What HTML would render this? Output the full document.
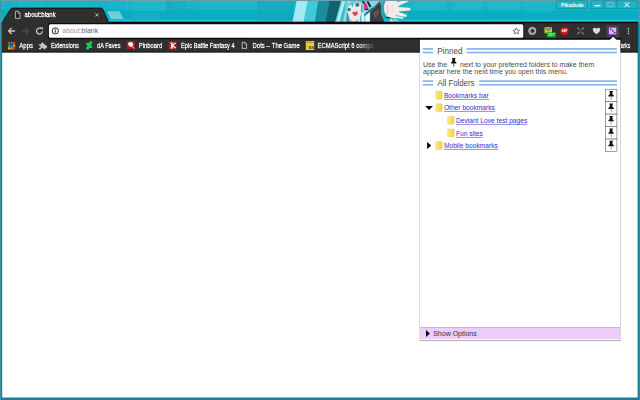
<!DOCTYPE html>
<html><head><meta charset="utf-8"><title>about:blank</title>
<style>
*{margin:0;padding:0;box-sizing:border-box}
html,body{width:640px;height:400px;overflow:hidden;background:#1b8196}
body{position:relative;font-family:"Liberation Sans",sans-serif}
svg{position:absolute;left:0;top:0}
text{font-family:"Liberation Sans",sans-serif;white-space:pre}
.h{font-size:8.6px;fill:#484848}
.p{font-size:7px;fill:#4c4c4c}
.l{font-size:6.67px;fill:#332dcc}
.bm{font-size:6.6px;fill:#fff;stroke:#fff;stroke-width:.28px}
</style></head><body>
<svg width="640" height="400" viewBox="0 0 640 400">
<defs>
<linearGradient id="fg" x1="0" x2="1" y1="0" y2="0"><stop offset="0" stop-color="#f8ea88"/><stop offset="1" stop-color="#eed24a"/></linearGradient>
<linearGradient id="fade" x1="0" x2="1"><stop offset="0" stop-color="#2f2f2f" stop-opacity="0"/><stop offset="1" stop-color="#2f2f2f"/></linearGradient>
<linearGradient id="tg" gradientUnits="userSpaceOnUse" x1="0" x2="0" y1="0" y2="22"><stop offset="0" stop-color="#19b7ca"/><stop offset=".42" stop-color="#15b4c8"/><stop offset=".52" stop-color="#09aec1"/><stop offset=".87" stop-color="#07adc0"/><stop offset=".91" stop-color="#20c2d5"/><stop offset="1" stop-color="#24c6d8"/></linearGradient>
</defs>
<!-- window frame -->
<rect x="0" y="0" width="640" height="400" fill="#1a7f95"/>
<rect x="0" y="0" width="1" height="400" fill="#3b90a2"/>
<rect x="639" y="0" width="1" height="400" fill="#2f8a9d"/>
<!-- title bar -->
<g id="titlebar">
  <rect x="0" y="0" width="640" height="23" fill="url(#tg)"/>
  <rect x="126" y="1" width="40" height="10" fill="#22bbce" opacity=".5"/>
  <rect x="132" y="13" width="28" height="8" fill="#1ab3c7" opacity=".6"/>
  <rect x="166" y="1" width="20" height="14" fill="#15aabe" opacity=".5"/>
  <rect x="200" y="1" width="57" height="9" fill="#21b9cc" opacity=".6"/>
  <rect x="257" y="1" width="36" height="20" fill="#13a8bd" opacity=".6"/>
  <rect x="414" y="1.5" width="32" height="9" fill="#20bbce" opacity=".55"/>
  <rect x="453" y="1.5" width="29" height="9" fill="#20bbce" opacity=".55"/>
  <rect x="488" y="1.5" width="32" height="9" fill="#20bbce" opacity=".55"/>
  <rect x="524" y="1.5" width="29" height="10.5" fill="#20bbce" opacity=".5"/>
  <path d="M449.5 1v11.5h-33M484 9.5l6 7.5h32v-6M130 1v14h38M168 1v14M262 10h-58v8" fill="none" stroke="#0e9db1" stroke-width=".6" opacity=".55"/>
  <rect x="4" y="1" width="14" height="12" fill="#14a9bd" opacity=".35"/>
  <rect x="44" y="1" width="18" height="7" fill="#14a9bd" opacity=".3"/>
  <rect x="86" y="1" width="22" height="7" fill="#14a9bd" opacity=".3"/>
  <rect x="30" y="1" width="60" height="6" fill="#20b6ca" opacity=".5"/>
    <polygon points="296.8,0 308,0 303.8,22 292.5,22" fill="#a7e8f2"/>
  <polygon points="308,0 318.3,0 315,22 303.8,22" fill="#3fc9db"/>
  <polygon points="318.3,0 329.6,0 325.4,22 315,22" fill="#1a8d9e"/>
  <polygon points="329.6,0 341.3,0 335.2,22 325.4,22" fill="#13636f"/>
  <!-- hair base -->
  <polygon points="341.3,0 381,0 381,22 335.2,22" fill="#5fcad8"/>
  <polygon points="342.6,0 345.6,0 339.2,22 336.4,22" fill="#b2ebf2"/>
  <polygon points="345.6,0 347.4,1 342,22 340.4,22" fill="#3fb4c5"/>
  <polygon points="346,6 347.6,8 346,22 343.5,22" fill="#8fdde7"/>
  <polygon points="347,12 348.6,14 349,22 346.4,22" fill="#2d9fb1"/>
  <!-- shirt / lower right light area -->
  <polygon points="360,13 369.5,11 370,22 358,22" fill="#e4f3f7"/>
  <polygon points="360.4,12 361.8,12 361.4,22 359.8,22" fill="#4fbccb"/>
  <polygon points="364,14 365.2,14 365.4,22 364,22" fill="#7fd3df"/>
  <!-- face -->
  <path d="M347 5.5C349.5 2.6 356.5 1.6 361 3L361.8 12C361 17 357.5 21.6 352.5 21.6C349.5 20 346.8 12 347 5.5z" fill="#f7e7e3"/>
  <path d="M349 18C351 20.5 354 21.6 357 20.6L352.5 21.8z" fill="#e9cfc8"/>
  <ellipse cx="349.1" cy="9.5" rx="1.7" ry="1.8" fill="#1b7f8b"/>
  <ellipse cx="357.3" cy="4.9" rx="2.1" ry="1.8" fill="#1b7f8b"/>
  <path d="M352.3 12.3C353.2 11.2 354.4 11.6 355 12.4C355.6 11 357.2 10.8 357.7 12C357.9 14 356.6 15.8 355.2 16C353.8 15.6 352.3 14 352.3 12.3z" fill="#c6465f"/>
  <!-- bangs -->
  <path d="M344.5 0H365L363.5 4.6 360.5 2.4 356.5 2.8 353.5 4 352.8 7.5 351 5 349 5.6 347 9 345.6 12z" fill="#68cedb"/>
  <path d="M347.5 0h3.5l-2.5 4.5zM354.5 0h3.5l-2 2.6z" fill="#b2ebf2"/>
  <path d="M351.2 3.6L353 3 352.9 7.6z" fill="#3fb4c5"/>
  <!-- right hair + tie -->
  <polygon points="361,2.5 381,0 380,6 373,8 366.5,13 362,12.5" fill="#7fd6e2"/>
  <polygon points="361,4 362.6,5 362.2,12.5 360.8,12" fill="#3fb4c5"/>
  <polygon points="361.2,0 362.8,0 366,4.6 364.6,5.2" fill="#17171d"/>
  <polygon points="363.9,3.4 366.7,3.8 368.2,9 364.4,8.8" fill="#e8247a"/>
  <polygon points="364.2,8.8 368.4,9 368.6,9.9 364.4,9.8" fill="#17171d"/>
  <polygon points="366.6,1.4 368.4,1.2 371.4,6.6 369.6,7.2" fill="#17171d"/>
  <polygon points="372.6,7.2 373.8,8.6 364.8,16 363.6,14.8" fill="#1f8592"/>
  <!-- sleeve -->
  <polygon points="380,1.5 381,6 381.2,15 384.5,22 370,22 370.2,12 375,7" fill="#3c3c41"/>
  <polygon points="373,13 378,9 379.6,13.6 375,19" fill="#55555b"/>
  <path d="M380.2 1.2L366.4 14" stroke="#2a2350" stroke-width=".6" fill="none"/>
  <path d="M385.4 1C380.6 5 380.4 13 384.6 18.2L392.5 20.8" fill="none" stroke="#2aa3b3" stroke-width="1.6"/>
  <path d="M386.4 17.2L392.5 18.3" stroke="#17171d" stroke-width="1" fill="none"/>
  <!-- hand -->
  <path d="M385.5 1.5C388 -0.8 396 -0.8 398.2 2.5L399 12C398 15.5 392 18 387.5 16.8C383.5 14.5 383 5.5 385.5 1.5z" fill="#f8eaea"/>
  <path d="M387 4.5C388.2 8 388 12 387 15" fill="none" stroke="#ecd3d1" stroke-width="1.6"/>
  <path d="M392.2 3.6C393 7 392.8 10 392 13" fill="none" stroke="#f0dcda" stroke-width="1"/>
  <polygon points="395,2.5 406,0 408.6,0 408.2,1.6 397.8,6.2" fill="#f8eaea"/>
  <polygon points="397.4,7 409.6,7.8 410.9,9.1 409.8,10.5 398,11.4" fill="#f8eaea"/>
  <polygon points="396.6,11.2 406.2,14.5 407,16 405.6,17 395,15" fill="#f8eaea"/>
  <polygon points="391,15.5 402.5,16.8 403.8,18 402.6,18.8 390,17.8" fill="#f7e6e4"/>
  <polygon points="389.5,18.6 395,18.8 399.4,22 390,22" fill="#a9e4ec"/>
  <polygon points="392,19 393.4,19 396.6,22 395,22" fill="#3fb4c5"/>
  <rect x="0" y="0" width="640" height="1" fill="#6f9ea8"/>
  <polygon points="107,11.2 119.6,11.2 123.6,18.9 111,18.9" fill="#6cd0dd"/>
  <g fill="#1fb4c8" stroke="#128a9c" stroke-width=".6">
    <rect x="556.5" y="0.8" width="30.8" height="7.8"/>
    <rect x="591" y="0.8" width="13" height="7.8"/>
    <rect x="604" y="0.8" width="13" height="7.8"/>
    <rect x="617" y="0.8" width="20.5" height="7.8"/>
  </g>
  <rect x="594.5" y="5" width="6" height="1.4" fill="#d7f3f7"/>
  <rect x="607.8" y="2.6" width="5.4" height="4" fill="none" stroke="#62c9d7" stroke-width=".9"/>
  <path d="M624.6 2.4l4.6 4.6M629.2 2.4l-4.6 4.6" stroke="#bdeaf0" stroke-width="1.1"/>
  <rect x="637.8" y="1" width="2.2" height="22" fill="#2aa9bb"/>
  <rect x="0" y="0" width="1.2" height="23" fill="#3b98a8"/>
  <text x="561" y="7" textLength="22.6" lengthAdjust="spacingAndGlyphs" style="font-size:5.6px;fill:#f4fcfd;font-weight:bold">Pikadude</text>
</g>
<!-- toolbar -->
<rect x="2" y="22" width="636" height="30.4" fill="#2f2f2f"/>
<rect x="2" y="51.7" width="636" height="1" fill="#0d0d0d"/>
<rect x="108" y="21.7" width="530" height="1.5" fill="#170609"/>
<!-- tab -->
<path d="M1.5 23.5 L3.5 20 L10.6 9.2 Q11.4 8.1 13 8.1 L100.6 8.1 Q102.2 8.1 103 9.4 L108.6 22.2 L109.2 23.5 Z" fill="#2f2f2f"/>
<path d="M2 22.6 L3.5 20 L10.6 9.2 Q11.4 8.1 13 8.1 L100.6 8.1 Q102.2 8.1 103 9.4 L108.6 22.2" fill="none" stroke="#120808" stroke-width=".8"/>
<rect x="2.2" y="22.4" width="106.5" height="2" fill="#2f2f2f"/>
<path d="M15.4 11.3h2.7l1.9 1.9v5.2h-4.6z" fill="#222" stroke="#d4d4d4" stroke-width=".8"/><path d="M17.9 11.4v2h2" fill="none" stroke="#d4d4d4" stroke-width=".6"/>
<path d="M95.3 13.4l3.1 3.1M98.4 13.4l-3.1 3.1" stroke="#cfcfcf" stroke-width=".85"/>
<text class="bm" x="24.5" y="16.8" textLength="31.2" lengthAdjust="spacingAndGlyphs" style="font-size:6.3px;filter:drop-shadow(0 0 .45px #000) drop-shadow(0 0 .45px #000)">about:blank</text>
<!-- page -->
<rect x="2.2" y="52.7" width="635.4" height="344.8" fill="#fff"/>
<!-- url -->
<rect x="47.9" y="23" width="476.4" height="16.3" rx="2" fill="#0d0d0d"/>
<rect x="48.9" y="24.3" width="474.4" height="13.5" rx="1.5" fill="#fff"/>
<g id="icons">
  <path d="M15 31H8.6M11.6 28l-3 3 3 3" fill="none" stroke="#c9c9c9" stroke-width="1.3"/>
  <path d="M22 31h6.4M25.4 28l3 3-3 3" fill="none" stroke="#4a4a4a" stroke-width="1.3"/>
  <path d="M42.5 31.3a3 3 0 1 1-1.1-2.6" fill="none" stroke="#cdcdcd" stroke-width="1.25"/>
  <path d="M40.1 27.3h2.8v2.8z" fill="#cdcdcd"/>
  <circle cx="55.3" cy="30.9" r="3.1" fill="none" stroke="#2c2c2c" stroke-width="1"/>
  <rect x="54.75" y="30.3" width="1.1" height="2.4" fill="#2c2c2c"/><rect x="54.75" y="28.8" width="1.1" height="1" fill="#2c2c2c"/>
  <path d="M516.3 27.8l1 2.2 2.3.2-1.8 1.5.6 2.3-2.1-1.3-2.1 1.3.6-2.3-1.8-1.5 2.3-.2z" fill="none" stroke="#444" stroke-width=".7"/>
  <circle cx="532.3" cy="30.9" r="3.7" fill="#8c8c8c"/><circle cx="532.6" cy="30.9" r="1.7" fill="#303030"/><circle cx="532.3" cy="30.9" r="3.5" fill="none" stroke="#c4c4c4" stroke-width="1"/>
  <path d="M544.5 27.2h7.5v6H544.5z" fill="#c6cb2c"/>
  <path d="M545.4 27.6l2.9 2.8 2.9-2.8" fill="none" stroke="#27306a" stroke-width=".9"/>
  <rect x="546.6" y="32.3" width="9.3" height="5.1" fill="#13a024"/>
  <text x="548" y="36.3" textLength="6.4" lengthAdjust="spacingAndGlyphs" style="font-size:3.9px;fill:#e8ffe8;font-weight:bold">117</text>
  <circle cx="564.5" cy="30.9" r="4" fill="#d8191a" stroke="#8e1414" stroke-width=".5"/>
  <text x="561.7" y="32.1" textLength="5.7" lengthAdjust="spacingAndGlyphs" style="font-size:3.3px;fill:#fff;font-weight:bold">ABP</text>
  <path d="M577.3 27.4l6.6 6.8M583.9 27.4l-6.6 6.8" stroke="#7c7c7c" stroke-width="1.4"/>
  <path d="M580.6 27.6l1.1 3.2-1.1 3.2-1.1-3.2zM577.2 30.8l3.4-1 3.4 1-3.4 1z" fill="#2f2f2f"/>
  <path d="M596.5 34.2c-5-3-4.2-6.4-1.9-6.4 1 0 1.6.6 1.9 1.2.3-.6.9-1.2 1.9-1.2 2.3 0 3.1 3.4-1.9 6.4z" fill="#ddd"/>
  <rect x="606.6" y="25.2" width="12.6" height="12" fill="#444"/>
  <rect x="608.6" y="27.2" width="8.1" height="7.6" rx="1.2" fill="#ddb6f3" stroke="#6a2eb0" stroke-width=".9"/>
  <circle cx="610.8" cy="29.3" r=".8" fill="#1a1a1a"/><circle cx="612.8" cy="31" r=".8" fill="#1a1a1a"/><circle cx="614.7" cy="32.7" r=".8" fill="#1a1a1a"/>
  <circle cx="628.4" cy="28.6" r=".8" fill="#ccc"/><circle cx="628.4" cy="31" r=".8" fill="#ccc"/><circle cx="628.4" cy="33.4" r=".8" fill="#ccc"/>
</g>
<text x="62.3" y="33.3" textLength="35.8" lengthAdjust="spacingAndGlyphs" style="font-size:6.9px;fill:#9a9a9a">about:<tspan fill="#5e5e5e">blank</tspan></text>
<!-- bookmarks -->
<g id="bmicons">
   <rect x="7.9" y="41.8" width="2.1" height="2.3" fill="#dc3a2e"/><rect x="10.5" y="41.8" width="2.1" height="2.3" fill="#3a7ad8"/><rect x="13.1" y="41.8" width="2.1" height="2.3" fill="#dc3a2e"/>
   <rect x="7.9" y="44.5" width="2.1" height="2.3" fill="#2aa85a"/><rect x="10.5" y="44.5" width="2.1" height="2.3" fill="#3a7ad8"/><rect x="13.1" y="44.5" width="2.1" height="2.3" fill="#f5b400"/>
   <rect x="7.9" y="47.2" width="2.1" height="2.3" fill="#f5b400"/><rect x="10.5" y="47.2" width="2.1" height="2.3" fill="#f5b400"/><rect x="13.1" y="47.2" width="2.1" height="2.3" fill="#dc3a2e"/>
  <path d="M38.9 44.3h2.3a1.3 1.3 0 1 1 2.4 0h1.7v1.3a1.3 1.3 0 1 1 0 2.4v1.3h-1.9a1.1 1.1 0 1 0-2 0h-2.5v-1.5a1.1 1.1 0 1 0 0-2z" fill="#c8c8c8"/>
  <path d="M89.9 41.2h2.3v1.7l-1.5 2.8h1.5v2.3h-2.8l-.8 1.6h-2.4v-1.7l1.5-2.8h-1.5v-2.3h2.8z" fill="#10cf48"/>
  <rect x="126.6" y="41" width="8.4" height="8.2" fill="#b01a1c"/>
  <path d="M128.4 43l3.3-.6 1.3 2.2-1.6 1.8-2.2-.6zM131.6 45.8l2.6 2.7" stroke="#fff" stroke-width=".9" fill="#fff"/>
  <rect x="168.6" y="41.4" width="8" height="8.2" fill="#b51d1f"/>
  <path d="M170.5 43h2.4M170.5 48h2.4M171.7 43v5M175.6 43l-3.3 2.5 3.3 2.5" stroke="#fff" stroke-width="1.15" fill="none"/>
  <path d="M242.2 42.3h2.8l1.6 1.6v4.5h-4.4z" fill="none" stroke="#d8d8d8" stroke-width=".8"/>
  <path d="M244.8 42.4v1.7h1.7" fill="none" stroke="#d8d8d8" stroke-width=".5"/>
  <rect x="305.6" y="40.9" width="8.8" height="9.3" fill="#e2d132" stroke="#1a1a40" stroke-width=".4"/>
  <rect x="305.6" y="42.3" width="8.8" height=".6" fill="#8a7c12"/>
  <text x="309" y="49" textLength="5" lengthAdjust="spacingAndGlyphs" style="font-size:4.2px;fill:#333;font-weight:bold">ES</text>
</g>
<rect x="418.5" y="38.1" width="202.7" height="14.5" fill="#0d0d0d"/>
<path d="M608.3 39.5L613.2 35.2 618.1 39.5z" fill="#0d0d0d"/>
<rect x="419.8" y="39.8" width="200.6" height="300.4" fill="#fff"/>
<path d="M419.6 52.4V340.4H620.5V52.4" fill="none" stroke="#bdbdbd" stroke-width=".6"/>
<rect x="420" y="340.2" width="200.6" height=".9" fill="#9a9a9a" opacity=".75"/>
<path d="M609.4 40.2L613.2 36.5 617 40.2z" fill="#fff"/>
<rect x="422.8" y="48.1" width="10.2" height="1.6" fill="#7fb2e8"/>
<rect x="466.6" y="48.1" width="150.3" height="1.6" fill="#7fb2e8"/>
<rect x="422.8" y="51.75" width="10.2" height="1.6" fill="#7fb2e8"/>
<rect x="466.6" y="51.75" width="150.3" height="1.6" fill="#7fb2e8"/>
<rect x="422.8" y="80.3" width="10.2" height="1.6" fill="#7fb2e8"/>
<rect x="479.2" y="80.3" width="137.7" height="1.6" fill="#7fb2e8"/>
<rect x="422.8" y="83.95" width="10.2" height="1.6" fill="#7fb2e8"/>
<rect x="479.2" y="83.95" width="137.7" height="1.6" fill="#7fb2e8"/>
<text class="h" x="437.2" y="53.6" textLength="25.2" lengthAdjust="spacingAndGlyphs">Pinned</text>
<text class="h" x="437.5" y="85.6" textLength="37" lengthAdjust="spacingAndGlyphs">All Folders</text>
<text class="p" x="423" y="66.5">Use the</text>
<text class="p" x="460" y="66.5">next to your preferred folders to make them</text>
<text class="p" x="423" y="74.4">appear here the next time you open this menu.</text>
<g transform="translate(450.4,57.9)"><path d="M1.6 0h3.6v.9h-.7l.3 2.7 1.2 1.1v.8H.6v-.8l1.2-1.1.3-2.7h-.5z" fill="#111"/><rect x="3" y="5.4" width=".8" height="3.3" fill="#222"/></g>
<rect x="435.6" y="91.2" width="6.6" height="8" rx="1" fill="url(#fg)" stroke="#e9cf48" stroke-width=".4"/>
<text class="l" x="443.9" y="98">Bookmarks bar</text>
<rect x="443.9" y="98.95" width="45.1" height=".6" fill="#4a45d6"/>
<rect x="605.5" y="89.25" width="11.4" height="12.45" fill="#fff" stroke="#777" stroke-width=".7"/>
<g transform="translate(607.8,91.05)"><path d="M1.6 0h3.6v.9h-.7l.3 2.5 1.2 1.1v.9H.6v-.9l1.2-1.1.3-2.5h-.5z" fill="#111"/><rect x="3" y="5.4" width=".8" height="3.4" fill="#8a8a8a"/></g>
<rect x="435.6" y="103.8" width="6.6" height="8" rx="1" fill="url(#fg)" stroke="#e9cf48" stroke-width=".4"/>
<text class="l" x="443.9" y="110">Other bookmarks</text>
<rect x="443.9" y="110.95" width="51.4" height=".6" fill="#4a45d6"/>
<rect x="605.5" y="101.7" width="11.4" height="12.45" fill="#fff" stroke="#777" stroke-width=".7"/>
<g transform="translate(607.8,103.5)"><path d="M1.6 0h3.6v.9h-.7l.3 2.5 1.2 1.1v.9H.6v-.9l1.2-1.1.3-2.5h-.5z" fill="#111"/><rect x="3" y="5.4" width=".8" height="3.4" fill="#8a8a8a"/></g>
<rect x="447.6" y="116.3" width="6.6" height="8" rx="1" fill="url(#fg)" stroke="#e9cf48" stroke-width=".4"/>
<text class="l" x="455.9" y="123">Deviant Love test pages</text>
<rect x="455.9" y="123.95" width="71.2" height=".6" fill="#4a45d6"/>
<rect x="605.5" y="114.15" width="11.4" height="12.45" fill="#fff" stroke="#777" stroke-width=".7"/>
<g transform="translate(607.8,115.95)"><path d="M1.6 0h3.6v.9h-.7l.3 2.5 1.2 1.1v.9H.6v-.9l1.2-1.1.3-2.5h-.5z" fill="#111"/><rect x="3" y="5.4" width=".8" height="3.4" fill="#8a8a8a"/></g>
<rect x="447.6" y="128.9" width="6.6" height="8" rx="1" fill="url(#fg)" stroke="#e9cf48" stroke-width=".4"/>
<text class="l" x="455.9" y="136">Fun sites</text>
<rect x="455.9" y="136.95" width="27" height=".6" fill="#4a45d6"/>
<rect x="605.5" y="126.6" width="11.4" height="12.45" fill="#fff" stroke="#777" stroke-width=".7"/>
<g transform="translate(607.8,128.4)"><path d="M1.6 0h3.6v.9h-.7l.3 2.5 1.2 1.1v.9H.6v-.9l1.2-1.1.3-2.5h-.5z" fill="#111"/><rect x="3" y="5.4" width=".8" height="3.4" fill="#8a8a8a"/></g>
<rect x="435.6" y="141.5" width="6.6" height="8" rx="1" fill="url(#fg)" stroke="#e9cf48" stroke-width=".4"/>
<text class="l" x="443.9" y="148">Mobile bookmarks</text>
<rect x="443.9" y="148.95" width="54.2" height=".6" fill="#4a45d6"/>
<rect x="605.5" y="139.05" width="11.4" height="12.45" fill="#fff" stroke="#777" stroke-width=".7"/>
<g transform="translate(607.8,140.85)"><path d="M1.6 0h3.6v.9h-.7l.3 2.5 1.2 1.1v.9H.6v-.9l1.2-1.1.3-2.5h-.5z" fill="#111"/><rect x="3" y="5.4" width=".8" height="3.4" fill="#8a8a8a"/></g>
<path d="M425.2 105.9h7.8l-3.9 4.2z" fill="#000"/>
<path d="M427.1 141.9v7.2l4.1-3.6z" fill="#000"/>
<rect x="420.3" y="327.6" width="199.7" height="11.5" fill="#eeccfb"/>
<rect x="420.3" y="327" width="199.7" height=".7" fill="#aaa"/>
<path d="M426 330.1v7l3.8-3.5z" fill="#000"/>
<text class="p" x="433.2" y="335.7" style="fill:#333">Show Options</text>
<g style="filter:drop-shadow(0 0 .45px #000) drop-shadow(0 0 .45px #000)">
<text class="bm" x="19.2" y="47.6" textLength="13.9" lengthAdjust="spacingAndGlyphs">Apps</text>
<text class="bm" x="50.9" y="47.6" textLength="28" lengthAdjust="spacingAndGlyphs">Extensions</text>
<text class="bm" x="97" y="47.6" textLength="23.5" lengthAdjust="spacingAndGlyphs">dA Faves</text>
<text class="bm" x="138.8" y="47.6" textLength="23.4" lengthAdjust="spacingAndGlyphs">Pinboard</text>
<text class="bm" x="181" y="47.6" textLength="53.7" lengthAdjust="spacingAndGlyphs">Epic Battle Fantasy 4</text>
<text class="bm" x="252.6" y="47.6" textLength="47.1" lengthAdjust="spacingAndGlyphs">Dots -- The Game</text>
<text class="bm" x="317.5" y="47.6" textLength="56.5" lengthAdjust="spacingAndGlyphs">ECMAScript 6 compa</text>
<text class="bm" x="620.7" y="47.6" textLength="9.6" lengthAdjust="spacingAndGlyphs">arks</text>
</g>
<rect x="358" y="40" width="17" height="11.4" fill="url(#fade)"/>
<rect x="375" y="40" width="43.6" height="11.4" fill="#2f2f2f"/>
</svg>
</body></html>
